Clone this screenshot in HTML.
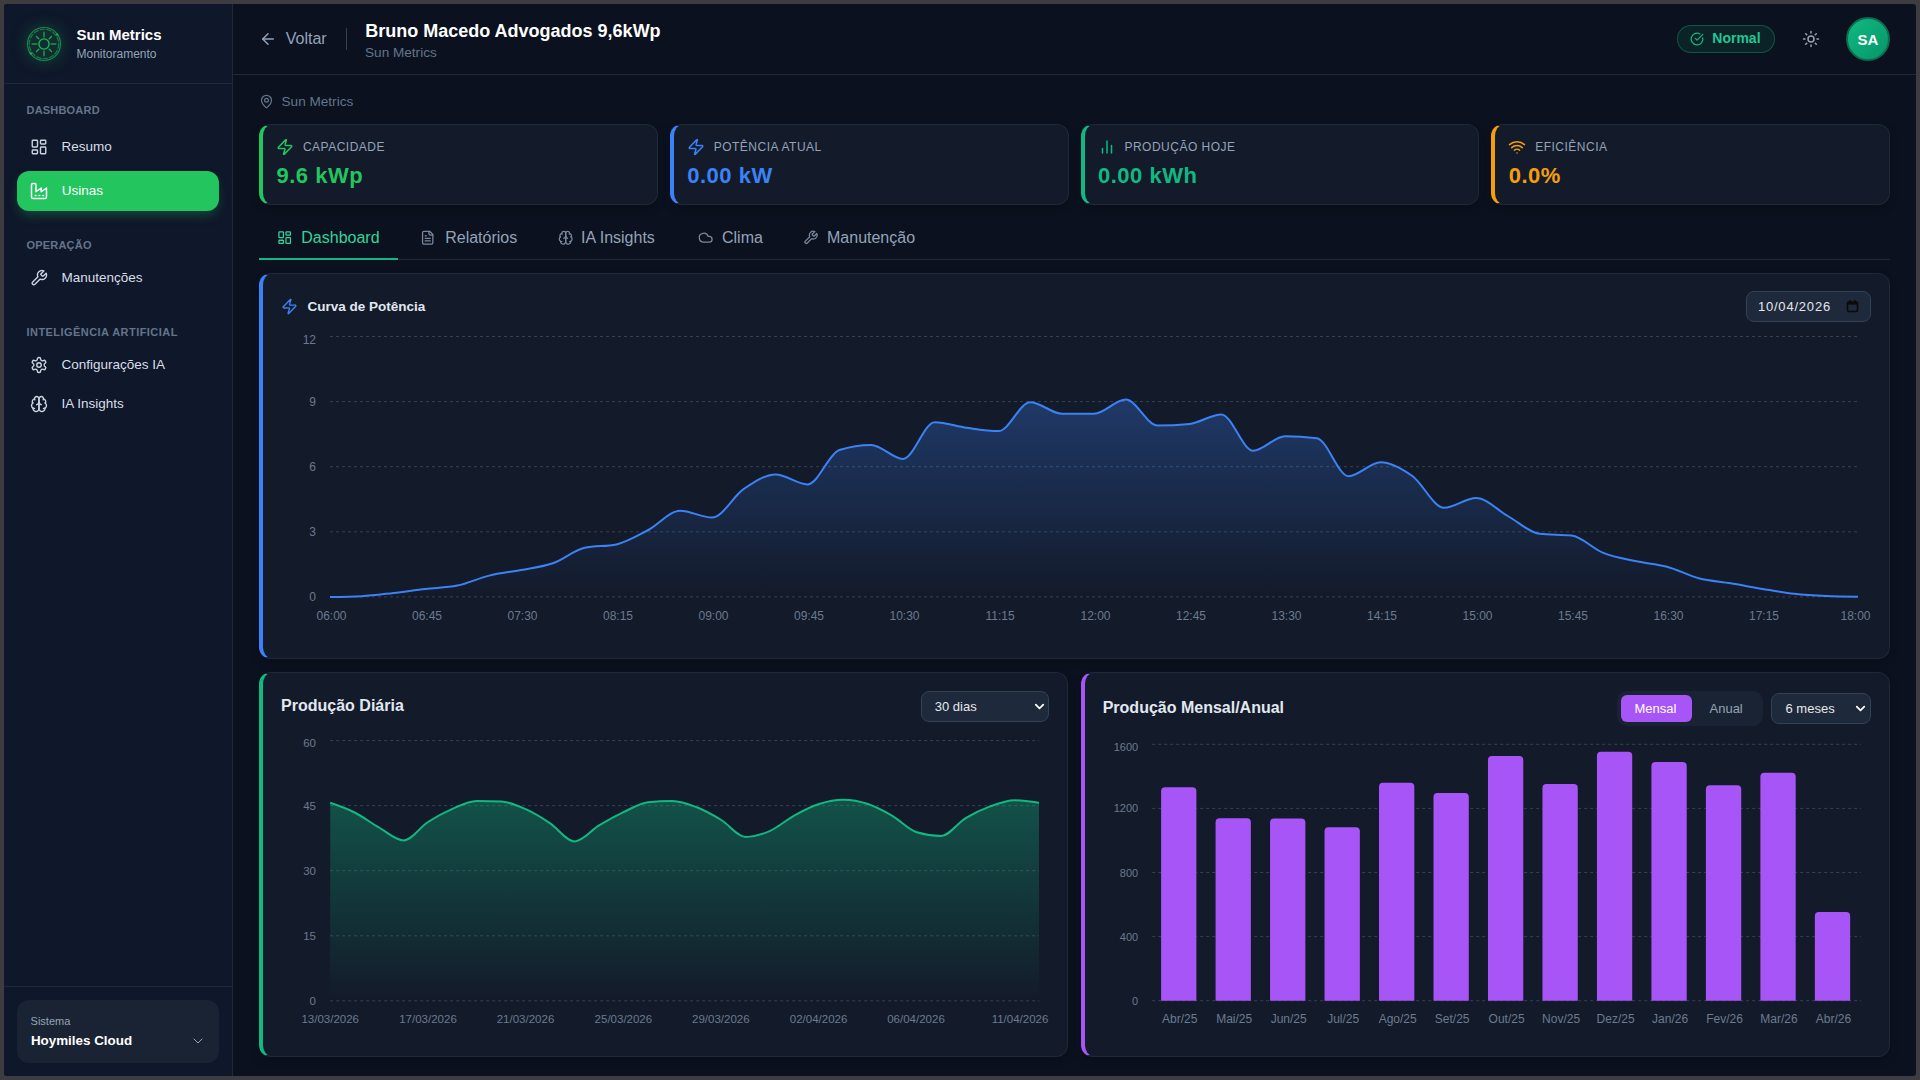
<!DOCTYPE html><html><head><meta charset="utf-8"><style>
html,body{margin:0;padding:0;width:1920px;height:1080px;overflow:hidden;background:#3d3c41;font-family:"Liberation Sans", sans-serif;}
#app{position:absolute;left:4px;top:4px;width:1912px;height:1072px;border-radius:3px;overflow:hidden;background:#0b111e;}
</style></head><body><div id="app"></div>
<div style="position:absolute;left:0;top:0;width:1920px;height:1080px;">
<div style="position:absolute;left:4.00px;top:4.00px;width:228.00px;height:1072.00px;background:#0f172a;border-top-left-radius:3px;border-bottom-left-radius:3px;"></div>
<div style="position:absolute;left:232.00px;top:4.00px;width:1.00px;height:1072.00px;background:#1e293b;"></div>
<div style="position:absolute;left:4.00px;top:83.00px;width:228.00px;height:1.00px;background:#1e293b;"></div>
<div style="position:absolute;left:26px;top:26px;width:36px;height:36px;border-radius:18px;background:rgba(34,197,94,0.13);box-shadow:0 0 16px rgba(34,197,94,0.25);"></div>
<svg style="position:absolute;left:24px;top:24px" width="40" height="40" viewBox="0 0 40 40" fill="none" stroke="#22c55e" stroke-linecap="round">
<circle cx="20" cy="20" r="16.5" stroke-width="1.2" stroke-opacity="0.6"/>
<circle cx="20" cy="20" r="14.7" stroke-width="1.1" stroke-opacity="0.55" stroke-dasharray="4.5 2"/>
<circle cx="33.2" cy="10.6" r="1.2" fill="#22c55e" fill-opacity="0.8" stroke="none"/>
<circle cx="6.8" cy="29.4" r="1.2" fill="#22c55e" fill-opacity="0.8" stroke="none"/>
<circle cx="20" cy="20" r="5.1" stroke-width="1.3" stroke-opacity="0.95"/>
<g stroke-width="1.5" stroke-opacity="0.7"><path d="M20 8.2v4.6M20 27.2v4.6M8.2 20h4.6M27.2 20h4.6"/></g>
<g stroke-width="1.3" stroke-opacity="0.85"><path d="M12.5 12.5l2.4 2.4M25.1 25.1l2.4 2.4M12.5 27.5l2.4-2.4M25.1 14.9l2.4-2.4"/></g>
</svg>
<div style="position:absolute;left:76.50px;top:26.82px;font-size:15px;line-height:15px;font-weight:700;color:#ffffff;letter-spacing:0px;white-space:nowrap;">Sun Metrics</div>
<div style="position:absolute;left:76.50px;top:47.94px;font-size:12px;line-height:12px;font-weight:400;color:#94a3b8;letter-spacing:0px;white-space:nowrap;">Monitoramento</div>
<div style="position:absolute;left:26.50px;top:104.63px;font-size:11px;line-height:11px;font-weight:700;color:#64748b;letter-spacing:0.2px;white-space:nowrap;">DASHBOARD</div>
<svg style="position:absolute;left:30.00px;top:138.00px;" width="18" height="18" viewBox="0 0 24 24" fill="none" stroke="#cbd5e1" stroke-width="1.85" stroke-linecap="round" stroke-linejoin="round"><rect width="7" height="9" x="3" y="3" rx="1"/><rect width="7" height="5" x="14" y="3" rx="1"/><rect width="7" height="9" x="14" y="12" rx="1"/><rect width="7" height="5" x="3" y="16" rx="1"/></svg>
<div style="position:absolute;left:61.50px;top:139.91px;font-size:13.5px;line-height:13.5px;font-weight:400;color:#d9dee7;letter-spacing:0px;white-space:nowrap;">Resumo</div>
<div style="position:absolute;left:17.00px;top:171.00px;width:202.00px;height:40.00px;background:#22c55e;border-radius:12px;box-shadow:0 6px 12px -2px rgba(34,197,94,0.3);"></div>
<svg style="position:absolute;left:30.00px;top:182.00px;" width="18" height="18" viewBox="0 0 24 24" fill="none" stroke="#ffffff" stroke-width="2" stroke-linecap="round" stroke-linejoin="round"><path d="M2 20a2 2 0 0 0 2 2h16a2 2 0 0 0 2-2V8l-7 5V8l-7 5V4a2 2 0 0 0-2-2H4a2 2 0 0 0-2 2Z"/><path d="M17 18h1"/><path d="M12 18h1"/><path d="M7 18h1"/></svg>
<div style="position:absolute;left:61.75px;top:184.31px;font-size:13.5px;line-height:13.5px;font-weight:400;color:#ffffff;letter-spacing:0px;white-space:nowrap;">Usinas</div>
<div style="position:absolute;left:26.50px;top:239.53px;font-size:11px;line-height:11px;font-weight:700;color:#64748b;letter-spacing:0.2px;white-space:nowrap;">OPERAÇÃO</div>
<svg style="position:absolute;left:30.00px;top:268.80px;" width="18" height="18" viewBox="0 0 24 24" fill="none" stroke="#cbd5e1" stroke-width="1.85" stroke-linecap="round" stroke-linejoin="round"><path d="M14.7 6.3a1 1 0 0 0 0 1.4l1.6 1.6a1 1 0 0 0 1.4 0l3.77-3.77a6 6 0 0 1-7.94 7.94l-6.91 6.91a2.12 2.12 0 0 1-3-3l6.91-6.91a6 6 0 0 1 7.94-7.94l-3.76 3.76z"/></svg>
<div style="position:absolute;left:61.50px;top:271.21px;font-size:13.5px;line-height:13.5px;font-weight:400;color:#d9dee7;letter-spacing:0px;white-space:nowrap;">Manutenções</div>
<div style="position:absolute;left:26.50px;top:326.83px;font-size:11px;line-height:11px;font-weight:700;color:#64748b;letter-spacing:0.45px;white-space:nowrap;">INTELIGÊNCIA ARTIFICIAL</div>
<svg style="position:absolute;left:30.00px;top:355.90px;" width="18" height="18" viewBox="0 0 24 24" fill="none" stroke="#cbd5e1" stroke-width="1.85" stroke-linecap="round" stroke-linejoin="round"><path d="M12.22 2h-.44a2 2 0 0 0-2 2v.18a2 2 0 0 1-1 1.73l-.43.25a2 2 0 0 1-2 0l-.15-.08a2 2 0 0 0-2.73.73l-.22.38a2 2 0 0 0 .73 2.73l.15.1a2 2 0 0 1 1 1.72v.51a2 2 0 0 1-1 1.74l-.15.09a2 2 0 0 0-.73 2.73l.22.38a2 2 0 0 0 2.73.73l.15-.08a2 2 0 0 1 2 0l.43.25a2 2 0 0 1 1 1.73V20a2 2 0 0 0 2 2h.44a2 2 0 0 0 2-2v-.18a2 2 0 0 1 1-1.73l.43-.25a2 2 0 0 1 2 0l.15.08a2 2 0 0 0 2.73-.73l.22-.39a2 2 0 0 0-.73-2.73l-.15-.08a2 2 0 0 1-1-1.74v-.5a2 2 0 0 1 1-1.74l.15-.09a2 2 0 0 0 .73-2.73l-.22-.38a2 2 0 0 0-2.73-.73l-.15.08a2 2 0 0 1-2 0l-.43-.25a2 2 0 0 1-1-1.73V4a2 2 0 0 0-2-2z"/><circle cx="12" cy="12" r="3"/></svg>
<div style="position:absolute;left:61.50px;top:358.31px;font-size:13.5px;line-height:13.5px;font-weight:400;color:#d9dee7;letter-spacing:0px;white-space:nowrap;">Configurações IA</div>
<svg style="position:absolute;left:30.00px;top:394.80px;" width="18" height="18" viewBox="0 0 24 24" fill="none" stroke="#cbd5e1" stroke-width="1.85" stroke-linecap="round" stroke-linejoin="round"><path d="M12 5a3 3 0 1 0-5.997.125 4 4 0 0 0-2.526 5.77 4 4 0 0 0 .556 6.588A4 4 0 1 0 12 18Z"/><path d="M12 5a3 3 0 1 1 5.997.125 4 4 0 0 1 2.526 5.77 4 4 0 0 1-.556 6.588A4 4 0 1 1 12 18Z"/><path d="M15 13a4.5 4.5 0 0 1-3-4 4.5 4.5 0 0 1-3 4"/><path d="M17.599 6.5a3 3 0 0 0 .399-1.375"/><path d="M6.003 5.125A3 3 0 0 0 6.401 6.5"/><path d="M3.477 10.896a4 4 0 0 1 .585-.396"/><path d="M19.938 10.5a4 4 0 0 1 .585.396"/><path d="M6 18a4 4 0 0 1-1.967-.516"/><path d="M19.967 17.484A4 4 0 0 1 18 18"/></svg>
<div style="position:absolute;left:61.50px;top:397.21px;font-size:13.5px;line-height:13.5px;font-weight:400;color:#d9dee7;letter-spacing:0px;white-space:nowrap;">IA Insights</div>
<div style="position:absolute;left:4.00px;top:986.00px;width:228.00px;height:1.00px;background:#1e293b;"></div>
<div style="position:absolute;left:17.00px;top:1000.00px;width:202.00px;height:63.00px;background:#1a2333;border-radius:12px;"></div>
<div style="position:absolute;left:30.60px;top:1015.88px;font-size:11px;line-height:11px;font-weight:400;color:#94a3b8;letter-spacing:0px;white-space:nowrap;">Sistema</div>
<div style="position:absolute;left:30.90px;top:1034.05px;font-size:13.4px;line-height:13.4px;font-weight:700;color:#ffffff;letter-spacing:0px;white-space:nowrap;">Hoymiles Cloud</div>
<svg style="position:absolute;left:189.50px;top:1032.60px;" width="16" height="16" viewBox="0 0 24 24" fill="none" stroke="#94a3b8" stroke-width="1.5" stroke-linecap="round" stroke-linejoin="round"><path d="m6 9 6 6 6-6"/></svg>
<div style="position:absolute;left:233.00px;top:74.00px;width:1683.00px;height:1.00px;background:#1e293b;"></div>
<svg style="position:absolute;left:258.50px;top:29.70px;" width="18" height="18" viewBox="0 0 24 24" fill="none" stroke="#94a3b8" stroke-width="2" stroke-linecap="round" stroke-linejoin="round"><path d="m12 19-7-7 7-7"/><path d="M19 12H5"/></svg>
<div style="position:absolute;left:285.75px;top:31.38px;font-size:16px;line-height:16px;font-weight:400;color:#94a3b8;letter-spacing:0px;white-space:nowrap;">Voltar</div>
<div style="position:absolute;left:346.00px;top:28.00px;width:1.00px;height:22.00px;background:#334155;"></div>
<div style="position:absolute;left:365.25px;top:21.71px;font-size:18px;line-height:18px;font-weight:700;color:#ffffff;letter-spacing:0px;white-space:nowrap;">Bruno Macedo Advogados 9,6kWp</div>
<div style="position:absolute;left:365.00px;top:45.61px;font-size:13.6px;line-height:13.6px;font-weight:400;color:#64748b;letter-spacing:0px;white-space:nowrap;">Sun Metrics</div>
<div style="position:absolute;left:1677.00px;top:25.00px;width:98.00px;height:28.00px;background:rgba(16,185,129,0.1);border:1px solid rgba(16,185,129,0.35);border-radius:14px;box-sizing:border-box;"></div>
<svg style="position:absolute;left:1690.30px;top:32.40px;" width="14" height="14" viewBox="0 0 24 24" fill="none" stroke="#10b981" stroke-width="2.1" stroke-linecap="round" stroke-linejoin="round"><path d="M21.801 10A10 10 0 1 1 17 3.335"/><path d="m9 11 3 3L22 4"/></svg>
<div style="position:absolute;left:1712.30px;top:31.46px;font-size:14px;line-height:14px;font-weight:700;color:#1fc893;letter-spacing:0px;white-space:nowrap;">Normal</div>
<svg style="position:absolute;left:1802.00px;top:30.00px;" width="18" height="18" viewBox="0 0 24 24" fill="none" stroke="#9ca3af" stroke-width="2" stroke-linecap="round" stroke-linejoin="round"><circle cx="12" cy="12" r="4"/><path d="M12 2v2"/><path d="M12 20v2"/><path d="m4.93 4.93 1.41 1.41"/><path d="m17.66 17.66 1.41 1.41"/><path d="M2 12h2"/><path d="M20 12h2"/><path d="m6.34 17.66-1.41 1.41"/><path d="m19.07 4.93-1.41 1.41"/></svg>
<div style="position:absolute;left:1846px;top:17px;width:44px;height:44px;border-radius:22px;box-sizing:border-box;border:2.5px solid #0e6b4f;background:linear-gradient(135deg,#10b981,#059669);"></div>
<div style="position:absolute;left:1853.00px;top:31.67px;font-size:15px;line-height:15px;font-weight:700;color:#ffffff;letter-spacing:0px;white-space:nowrap;width:30px;text-align:center;">SA</div>
<svg style="position:absolute;left:258.50px;top:94.00px;" width="15" height="15" viewBox="0 0 24 24" fill="none" stroke="#64748b" stroke-width="2" stroke-linecap="round" stroke-linejoin="round"><path d="M20 10c0 4.993-5.539 10.193-7.399 11.799a1 1 0 0 1-1.202 0C9.539 20.193 4 14.993 4 10a8 8 0 0 1 16 0"/><circle cx="12" cy="10" r="3"/></svg>
<div style="position:absolute;left:281.50px;top:94.86px;font-size:13.6px;line-height:13.6px;font-weight:400;color:#64748b;letter-spacing:0px;white-space:nowrap;">Sun Metrics</div>
<div style="position:absolute;left:259.00px;top:124.00px;width:398.75px;height:81.00px;background:#131a2a;border:1px solid #1e293b;border-left:4px solid #22c55e;border-radius:12px;box-sizing:border-box;box-shadow:0 4px 8px rgba(0,0,0,0.18);"></div>
<svg style="position:absolute;left:276.00px;top:138.00px;" width="18" height="18" viewBox="0 0 24 24" fill="none" stroke="#22c55e" stroke-width="2" stroke-linecap="round" stroke-linejoin="round"><path d="M4 14a1 1 0 0 1-.78-1.63l9.9-10.2a.5.5 0 0 1 .86.46l-1.92 6.02A1 1 0 0 0 13 10h7a1 1 0 0 1 .78 1.63l-9.9 10.2a.5.5 0 0 1-.86-.46l1.92-6.02A1 1 0 0 0 11 14z"/></svg>
<div style="position:absolute;left:302.90px;top:140.59px;font-size:12px;line-height:12px;font-weight:400;color:#94a3b8;letter-spacing:0.5px;white-space:nowrap;">CAPACIDADE</div>
<div style="position:absolute;left:276.50px;top:165.45px;font-size:22px;line-height:22px;font-weight:700;color:#22c55e;letter-spacing:0.5px;white-space:nowrap;">9.6 kWp</div>
<div style="position:absolute;left:669.75px;top:124.00px;width:398.75px;height:81.00px;background:#131a2a;border:1px solid #1e293b;border-left:4px solid #3b82f6;border-radius:12px;box-sizing:border-box;box-shadow:0 4px 8px rgba(0,0,0,0.18);"></div>
<svg style="position:absolute;left:686.75px;top:138.00px;" width="18" height="18" viewBox="0 0 24 24" fill="none" stroke="#3b82f6" stroke-width="2" stroke-linecap="round" stroke-linejoin="round"><path d="M4 14a1 1 0 0 1-.78-1.63l9.9-10.2a.5.5 0 0 1 .86.46l-1.92 6.02A1 1 0 0 0 13 10h7a1 1 0 0 1 .78 1.63l-9.9 10.2a.5.5 0 0 1-.86-.46l1.92-6.02A1 1 0 0 0 11 14z"/></svg>
<div style="position:absolute;left:713.65px;top:140.59px;font-size:12px;line-height:12px;font-weight:400;color:#94a3b8;letter-spacing:0.5px;white-space:nowrap;">POTÊNCIA ATUAL</div>
<div style="position:absolute;left:687.25px;top:165.45px;font-size:22px;line-height:22px;font-weight:700;color:#3b82f6;letter-spacing:0.5px;white-space:nowrap;">0.00 kW</div>
<div style="position:absolute;left:1080.50px;top:124.00px;width:398.75px;height:81.00px;background:#131a2a;border:1px solid #1e293b;border-left:4px solid #10b981;border-radius:12px;box-sizing:border-box;box-shadow:0 4px 8px rgba(0,0,0,0.18);"></div>
<svg style="position:absolute;left:1097.50px;top:138.00px;" width="18" height="18" viewBox="0 0 24 24" fill="none" stroke="#10b981" stroke-width="2" stroke-linecap="round" stroke-linejoin="round"><path d="M18 20V10"/><path d="M12 20V4"/><path d="M6 20v-6"/></svg>
<div style="position:absolute;left:1124.40px;top:140.59px;font-size:12px;line-height:12px;font-weight:400;color:#94a3b8;letter-spacing:0.5px;white-space:nowrap;">PRODUÇÃO HOJE</div>
<div style="position:absolute;left:1098.00px;top:165.45px;font-size:22px;line-height:22px;font-weight:700;color:#10b981;letter-spacing:0.5px;white-space:nowrap;">0.00 kWh</div>
<div style="position:absolute;left:1491.25px;top:124.00px;width:398.75px;height:81.00px;background:#131a2a;border:1px solid #1e293b;border-left:4px solid #f59e0b;border-radius:12px;box-sizing:border-box;box-shadow:0 4px 8px rgba(0,0,0,0.18);"></div>
<svg style="position:absolute;left:1508.25px;top:138.00px;" width="18" height="18" viewBox="0 0 24 24" fill="none" stroke="#f59e0b" stroke-width="2" stroke-linecap="round" stroke-linejoin="round"><path d="M12 20h.01"/><path d="M2 8.82a15 15 0 0 1 20 0"/><path d="M5 12.859a10 10 0 0 1 14 0"/><path d="M8.5 16.429a5 5 0 0 1 7 0"/></svg>
<div style="position:absolute;left:1535.15px;top:140.59px;font-size:12px;line-height:12px;font-weight:400;color:#94a3b8;letter-spacing:0.5px;white-space:nowrap;">EFICIÊNCIA</div>
<div style="position:absolute;left:1508.75px;top:165.45px;font-size:22px;line-height:22px;font-weight:700;color:#f59e0b;letter-spacing:0.5px;white-space:nowrap;">0.0%</div>
<div style="position:absolute;left:259.00px;top:259.00px;width:1631.00px;height:1.00px;background:#1e293b;"></div>
<div style="position:absolute;left:259.00px;top:258.00px;width:139.00px;height:2.00px;background:#10b981;"></div>
<svg style="position:absolute;left:276.60px;top:229.90px;" width="15.4" height="15.4" viewBox="0 0 24 24" fill="none" stroke="#34d399" stroke-width="2" stroke-linecap="round" stroke-linejoin="round"><rect width="7" height="9" x="3" y="3" rx="1"/><rect width="7" height="5" x="14" y="3" rx="1"/><rect width="7" height="9" x="14" y="12" rx="1"/><rect width="7" height="5" x="3" y="16" rx="1"/></svg>
<div style="position:absolute;left:301.30px;top:230.18px;font-size:16px;line-height:16px;font-weight:400;color:#34d399;letter-spacing:0px;white-space:nowrap;">Dashboard</div>
<svg style="position:absolute;left:420.10px;top:229.90px;" width="15.4" height="15.4" viewBox="0 0 24 24" fill="none" stroke="#7b889c" stroke-width="2" stroke-linecap="round" stroke-linejoin="round"><path d="M15 2H6a2 2 0 0 0-2 2v16a2 2 0 0 0 2 2h12a2 2 0 0 0 2-2V7Z"/><path d="M14 2v4a2 2 0 0 0 2 2h4"/><path d="M10 9H8"/><path d="M16 13H8"/><path d="M16 17H8"/></svg>
<div style="position:absolute;left:445.20px;top:230.18px;font-size:16px;line-height:16px;font-weight:400;color:#94a3b8;letter-spacing:0px;white-space:nowrap;">Relatórios</div>
<svg style="position:absolute;left:557.60px;top:229.90px;" width="15.4" height="15.4" viewBox="0 0 24 24" fill="none" stroke="#7b889c" stroke-width="2" stroke-linecap="round" stroke-linejoin="round"><path d="M12 5a3 3 0 1 0-5.997.125 4 4 0 0 0-2.526 5.77 4 4 0 0 0 .556 6.588A4 4 0 1 0 12 18Z"/><path d="M12 5a3 3 0 1 1 5.997.125 4 4 0 0 1 2.526 5.77 4 4 0 0 1-.556 6.588A4 4 0 1 1 12 18Z"/><path d="M15 13a4.5 4.5 0 0 1-3-4 4.5 4.5 0 0 1-3 4"/><path d="M17.599 6.5a3 3 0 0 0 .399-1.375"/><path d="M6.003 5.125A3 3 0 0 0 6.401 6.5"/><path d="M3.477 10.896a4 4 0 0 1 .585-.396"/><path d="M19.938 10.5a4 4 0 0 1 .585.396"/><path d="M6 18a4 4 0 0 1-1.967-.516"/><path d="M19.967 17.484A4 4 0 0 1 18 18"/></svg>
<div style="position:absolute;left:581.00px;top:230.18px;font-size:16px;line-height:16px;font-weight:400;color:#94a3b8;letter-spacing:0px;white-space:nowrap;">IA Insights</div>
<svg style="position:absolute;left:698.10px;top:229.90px;" width="15.4" height="15.4" viewBox="0 0 24 24" fill="none" stroke="#7b889c" stroke-width="2" stroke-linecap="round" stroke-linejoin="round"><path d="M17.5 19H9a7 7 0 1 1 6.71-9h1.79a4.5 4.5 0 1 1 0 9Z"/></svg>
<div style="position:absolute;left:722.00px;top:230.18px;font-size:16px;line-height:16px;font-weight:400;color:#94a3b8;letter-spacing:0px;white-space:nowrap;">Clima</div>
<svg style="position:absolute;left:802.60px;top:229.90px;" width="15.4" height="15.4" viewBox="0 0 24 24" fill="none" stroke="#7b889c" stroke-width="2" stroke-linecap="round" stroke-linejoin="round"><path d="M14.7 6.3a1 1 0 0 0 0 1.4l1.6 1.6a1 1 0 0 0 1.4 0l3.77-3.77a6 6 0 0 1-7.94 7.94l-6.91 6.91a2.12 2.12 0 0 1-3-3l6.91-6.91a6 6 0 0 1 7.94-7.94l-3.76 3.76z"/></svg>
<div style="position:absolute;left:827.00px;top:230.18px;font-size:16px;line-height:16px;font-weight:400;color:#94a3b8;letter-spacing:0px;white-space:nowrap;">Manutenção</div>
<div style="position:absolute;left:259.00px;top:273.00px;width:1631.00px;height:385.50px;background:#131a2a;border:1px solid #1e293b;border-left:4px solid #3b82f6;border-radius:12px;box-sizing:border-box;box-shadow:0 4px 8px rgba(0,0,0,0.18);"></div>
<svg style="position:absolute;left:281.20px;top:297.80px;" width="17" height="17" viewBox="0 0 24 24" fill="none" stroke="#3b82f6" stroke-width="2" stroke-linecap="round" stroke-linejoin="round"><path d="M4 14a1 1 0 0 1-.78-1.63l9.9-10.2a.5.5 0 0 1 .86.46l-1.92 6.02A1 1 0 0 0 13 10h7a1 1 0 0 1 .78 1.63l-9.9 10.2a.5.5 0 0 1-.86-.46l1.92-6.02A1 1 0 0 0 11 14z"/></svg>
<div style="position:absolute;left:307.60px;top:300.41px;font-size:13.5px;line-height:13.5px;font-weight:700;color:#e2e8f0;letter-spacing:0px;white-space:nowrap;">Curva de Potência</div>
<div style="position:absolute;left:1746.00px;top:291.00px;width:125.00px;height:31.00px;background:#1e293b;border:1px solid #334155;border-radius:8px;box-sizing:border-box;"></div>
<div style="position:absolute;left:1757.90px;top:300.15px;font-size:13px;line-height:13px;font-weight:400;color:#e5e7eb;letter-spacing:0.8px;white-space:nowrap;">10/04/2026</div>
<svg style="position:absolute;left:1846px;top:299px" width="13" height="14" viewBox="0 0 13 14"><rect x="1.5" y="3" width="10" height="9.5" rx="1.2" fill="none" stroke="#0a0a0a" stroke-width="1.6"/><rect x="1.5" y="3" width="10" height="2.6" fill="#0a0a0a"/><rect x="3.3" y="1" width="1.6" height="2.5" fill="#0a0a0a"/><rect x="8.1" y="1" width="1.6" height="2.5" fill="#0a0a0a"/></svg>
<div style="position:absolute;left:259.00px;top:672.20px;width:808.50px;height:385.30px;background:#131a2a;border:1px solid #1e293b;border-left:4px solid #10b981;border-radius:12px;box-sizing:border-box;box-shadow:0 4px 8px rgba(0,0,0,0.18);"></div>
<div style="position:absolute;left:281.10px;top:697.68px;font-size:16px;line-height:16px;font-weight:700;color:#e2e8f0;letter-spacing:0px;white-space:nowrap;">Produção Diária</div>
<div style="position:absolute;left:921.00px;top:691.00px;width:128.00px;height:31.00px;background:#1e293b;border:1px solid #334155;border-radius:8px;box-sizing:border-box;"></div>
<div style="position:absolute;left:934.80px;top:700.15px;font-size:13px;line-height:13px;font-weight:400;color:#e5e7eb;letter-spacing:0px;white-space:nowrap;">30 dias</div>
<svg style="position:absolute;left:1031.50px;top:698.50px;" width="15" height="15" viewBox="0 0 24 24" fill="none" stroke="#ffffff" stroke-width="2.8" stroke-linecap="round" stroke-linejoin="round"><path d="m6 9 6 6 6-6"/></svg>
<div style="position:absolute;left:1081.00px;top:672.20px;width:809.00px;height:385.30px;background:#131a2a;border:1px solid #1e293b;border-left:4px solid #a855f7;border-radius:12px;box-sizing:border-box;box-shadow:0 4px 8px rgba(0,0,0,0.18);"></div>
<div style="position:absolute;left:1102.70px;top:700.38px;font-size:16px;line-height:16px;font-weight:700;color:#e2e8f0;letter-spacing:0px;white-space:nowrap;">Produção Mensal/Anual</div>
<div style="position:absolute;left:1617.30px;top:691.00px;width:145.40px;height:34.70px;background:#1a2333;border-radius:10px;"></div>
<div style="position:absolute;left:1621.00px;top:695.00px;width:71.00px;height:27.00px;background:#a855f7;border-radius:6px;"></div>
<div style="position:absolute;left:1634.50px;top:702.15px;font-size:13px;line-height:13px;font-weight:400;color:#ffffff;letter-spacing:0px;white-space:nowrap;">Mensal</div>
<div style="position:absolute;left:1709.50px;top:702.15px;font-size:13px;line-height:13px;font-weight:400;color:#94a3b8;letter-spacing:0px;white-space:nowrap;">Anual</div>
<div style="position:absolute;left:1771.00px;top:693.00px;width:100.00px;height:31.00px;background:#1e293b;border:1px solid #334155;border-radius:8px;box-sizing:border-box;"></div>
<div style="position:absolute;left:1785.50px;top:702.15px;font-size:13px;line-height:13px;font-weight:400;color:#e5e7eb;letter-spacing:0px;white-space:nowrap;">6 meses</div>
<svg style="position:absolute;left:1853.00px;top:700.50px;" width="15" height="15" viewBox="0 0 24 24" fill="none" stroke="#ffffff" stroke-width="2.8" stroke-linecap="round" stroke-linejoin="round"><path d="m6 9 6 6 6-6"/></svg>
<svg style="position:absolute;left:0;top:0" width="1920" height="1080" viewBox="0 0 1920 1080"><defs><linearGradient id="gb" x1="0" y1="0" x2="0" y2="1"><stop offset="0" stop-color="#3b82f6" stop-opacity="0.30"/><stop offset="1" stop-color="#3b82f6" stop-opacity="0.0"/></linearGradient><linearGradient id="gt" x1="0" y1="0" x2="0" y2="1"><stop offset="0" stop-color="#10b981" stop-opacity="0.35"/><stop offset="1" stop-color="#10b981" stop-opacity="0.0"/></linearGradient></defs><line x1="330" y1="336.5" x2="1858" y2="336.5" stroke="#374151" stroke-dasharray="3 3" stroke-width="1"/><line x1="330" y1="401.6" x2="1858" y2="401.6" stroke="#374151" stroke-dasharray="3 3" stroke-width="1"/><line x1="330" y1="466.7" x2="1858" y2="466.7" stroke="#374151" stroke-dasharray="3 3" stroke-width="1"/><line x1="330" y1="531.8" x2="1858" y2="531.8" stroke="#374151" stroke-dasharray="3 3" stroke-width="1"/><line x1="330" y1="596.9" x2="1858" y2="596.9" stroke="#374151" stroke-dasharray="3 3" stroke-width="1"/><path d="M330.00,597.00C340.61,596.87,351.22,596.73,361.83,596.20C372.44,595.67,383.06,594.12,393.67,592.90C404.28,591.68,414.89,590.12,425.50,588.90C436.11,587.68,446.72,587.80,457.33,585.60C467.94,583.40,478.56,578.20,489.17,575.60C499.78,573.00,510.39,572.05,521.00,570.00C531.61,567.95,542.22,567.00,552.83,563.30C563.44,559.60,574.06,550.07,584.67,547.80C595.28,545.53,605.89,546.67,616.50,544.40C627.11,542.13,637.72,535.62,648.33,530.00C658.94,524.38,669.56,510.70,680.17,510.70C690.78,510.70,701.39,517.50,712.00,517.50C722.61,517.50,733.22,496.08,743.83,488.90C754.44,481.72,765.06,474.40,775.67,474.40C786.28,474.40,796.89,484.40,807.50,484.40C818.11,484.40,828.72,453.40,839.33,450.00C849.94,446.60,860.56,444.90,871.17,444.90C881.78,444.90,892.39,458.90,903.00,458.90C913.61,458.90,924.22,422.20,934.83,422.20C945.44,422.20,956.06,426.32,966.67,427.80C977.28,429.28,987.89,431.10,998.50,431.10C1009.11,431.10,1019.72,402.20,1030.33,402.20C1040.94,402.20,1051.56,413.80,1062.17,413.80C1072.78,413.80,1083.39,413.80,1094.00,413.80C1104.61,413.80,1115.22,399.60,1125.83,399.60C1136.44,399.60,1147.06,425.60,1157.67,425.60C1168.28,425.60,1178.89,425.07,1189.50,424.00C1200.11,422.93,1210.72,414.40,1221.33,414.40C1231.94,414.40,1242.56,450.70,1253.17,450.70C1263.78,450.70,1274.39,436.20,1285.00,436.20C1295.61,436.20,1306.22,436.87,1316.83,438.20C1327.44,439.53,1338.06,476.20,1348.67,476.20C1359.28,476.20,1369.89,462.20,1380.50,462.20C1391.11,462.20,1401.72,468.40,1412.33,476.00C1422.94,483.60,1433.56,507.80,1444.17,507.80C1454.78,507.80,1465.39,498.00,1476.00,498.00C1486.61,498.00,1497.22,510.03,1507.83,516.00C1518.44,521.97,1529.06,532.60,1539.67,533.80C1550.28,535.00,1560.89,534.40,1571.50,535.60C1582.11,536.80,1592.72,548.65,1603.33,552.90C1613.94,557.15,1624.56,558.80,1635.17,561.10C1645.78,563.40,1656.39,563.85,1667.00,566.70C1677.61,569.55,1688.22,575.43,1698.83,578.20C1709.44,580.97,1720.06,581.52,1730.67,583.30C1741.28,585.08,1751.89,587.15,1762.50,588.90C1773.11,590.65,1783.72,592.62,1794.33,593.80C1804.94,594.98,1815.56,595.53,1826.17,596.00C1836.78,596.47,1847.39,596.58,1858.00,596.70L1858,596.9L330,596.9Z" fill="url(#gb)"/><path d="M330.00,597.00C340.61,596.87,351.22,596.73,361.83,596.20C372.44,595.67,383.06,594.12,393.67,592.90C404.28,591.68,414.89,590.12,425.50,588.90C436.11,587.68,446.72,587.80,457.33,585.60C467.94,583.40,478.56,578.20,489.17,575.60C499.78,573.00,510.39,572.05,521.00,570.00C531.61,567.95,542.22,567.00,552.83,563.30C563.44,559.60,574.06,550.07,584.67,547.80C595.28,545.53,605.89,546.67,616.50,544.40C627.11,542.13,637.72,535.62,648.33,530.00C658.94,524.38,669.56,510.70,680.17,510.70C690.78,510.70,701.39,517.50,712.00,517.50C722.61,517.50,733.22,496.08,743.83,488.90C754.44,481.72,765.06,474.40,775.67,474.40C786.28,474.40,796.89,484.40,807.50,484.40C818.11,484.40,828.72,453.40,839.33,450.00C849.94,446.60,860.56,444.90,871.17,444.90C881.78,444.90,892.39,458.90,903.00,458.90C913.61,458.90,924.22,422.20,934.83,422.20C945.44,422.20,956.06,426.32,966.67,427.80C977.28,429.28,987.89,431.10,998.50,431.10C1009.11,431.10,1019.72,402.20,1030.33,402.20C1040.94,402.20,1051.56,413.80,1062.17,413.80C1072.78,413.80,1083.39,413.80,1094.00,413.80C1104.61,413.80,1115.22,399.60,1125.83,399.60C1136.44,399.60,1147.06,425.60,1157.67,425.60C1168.28,425.60,1178.89,425.07,1189.50,424.00C1200.11,422.93,1210.72,414.40,1221.33,414.40C1231.94,414.40,1242.56,450.70,1253.17,450.70C1263.78,450.70,1274.39,436.20,1285.00,436.20C1295.61,436.20,1306.22,436.87,1316.83,438.20C1327.44,439.53,1338.06,476.20,1348.67,476.20C1359.28,476.20,1369.89,462.20,1380.50,462.20C1391.11,462.20,1401.72,468.40,1412.33,476.00C1422.94,483.60,1433.56,507.80,1444.17,507.80C1454.78,507.80,1465.39,498.00,1476.00,498.00C1486.61,498.00,1497.22,510.03,1507.83,516.00C1518.44,521.97,1529.06,532.60,1539.67,533.80C1550.28,535.00,1560.89,534.40,1571.50,535.60C1582.11,536.80,1592.72,548.65,1603.33,552.90C1613.94,557.15,1624.56,558.80,1635.17,561.10C1645.78,563.40,1656.39,563.85,1667.00,566.70C1677.61,569.55,1688.22,575.43,1698.83,578.20C1709.44,580.97,1720.06,581.52,1730.67,583.30C1741.28,585.08,1751.89,587.15,1762.50,588.90C1773.11,590.65,1783.72,592.62,1794.33,593.80C1804.94,594.98,1815.56,595.53,1826.17,596.00C1836.78,596.47,1847.39,596.58,1858.00,596.70" fill="none" stroke="#3b82f6" stroke-width="2"/><text x="316" y="343.7" text-anchor="end" font-size="12" fill="#6b7a8f" font-family="Liberation Sans">12</text><text x="316" y="405.8" text-anchor="end" font-size="12" fill="#6b7a8f" font-family="Liberation Sans">9</text><text x="316" y="470.9" text-anchor="end" font-size="12" fill="#6b7a8f" font-family="Liberation Sans">6</text><text x="316" y="536.0" text-anchor="end" font-size="12" fill="#6b7a8f" font-family="Liberation Sans">3</text><text x="316" y="601.1" text-anchor="end" font-size="12" fill="#6b7a8f" font-family="Liberation Sans">0</text><text x="331.5" y="619.8" text-anchor="middle" font-size="12" fill="#6b7a8f" font-family="Liberation Sans">06:00</text><text x="427.0" y="619.8" text-anchor="middle" font-size="12" fill="#6b7a8f" font-family="Liberation Sans">06:45</text><text x="522.5" y="619.8" text-anchor="middle" font-size="12" fill="#6b7a8f" font-family="Liberation Sans">07:30</text><text x="618.0" y="619.8" text-anchor="middle" font-size="12" fill="#6b7a8f" font-family="Liberation Sans">08:15</text><text x="713.5" y="619.8" text-anchor="middle" font-size="12" fill="#6b7a8f" font-family="Liberation Sans">09:00</text><text x="809.0" y="619.8" text-anchor="middle" font-size="12" fill="#6b7a8f" font-family="Liberation Sans">09:45</text><text x="904.5" y="619.8" text-anchor="middle" font-size="12" fill="#6b7a8f" font-family="Liberation Sans">10:30</text><text x="1000.0" y="619.8" text-anchor="middle" font-size="12" fill="#6b7a8f" font-family="Liberation Sans">11:15</text><text x="1095.5" y="619.8" text-anchor="middle" font-size="12" fill="#6b7a8f" font-family="Liberation Sans">12:00</text><text x="1191.0" y="619.8" text-anchor="middle" font-size="12" fill="#6b7a8f" font-family="Liberation Sans">12:45</text><text x="1286.5" y="619.8" text-anchor="middle" font-size="12" fill="#6b7a8f" font-family="Liberation Sans">13:30</text><text x="1382.0" y="619.8" text-anchor="middle" font-size="12" fill="#6b7a8f" font-family="Liberation Sans">14:15</text><text x="1477.5" y="619.8" text-anchor="middle" font-size="12" fill="#6b7a8f" font-family="Liberation Sans">15:00</text><text x="1573.0" y="619.8" text-anchor="middle" font-size="12" fill="#6b7a8f" font-family="Liberation Sans">15:45</text><text x="1668.5" y="619.8" text-anchor="middle" font-size="12" fill="#6b7a8f" font-family="Liberation Sans">16:30</text><text x="1764.0" y="619.8" text-anchor="middle" font-size="12" fill="#6b7a8f" font-family="Liberation Sans">17:15</text><text x="1855.5" y="619.8" text-anchor="middle" font-size="12" fill="#6b7a8f" font-family="Liberation Sans">18:00</text><line x1="330.2" y1="740.6" x2="1039" y2="740.6" stroke="#374151" stroke-dasharray="3 3" stroke-width="1"/><line x1="330.2" y1="805.6" x2="1039" y2="805.6" stroke="#374151" stroke-dasharray="3 3" stroke-width="1"/><line x1="330.2" y1="870.7" x2="1039" y2="870.7" stroke="#374151" stroke-dasharray="3 3" stroke-width="1"/><line x1="330.2" y1="935.8" x2="1039" y2="935.8" stroke="#374151" stroke-dasharray="3 3" stroke-width="1"/><line x1="330.2" y1="1000.8" x2="1039" y2="1000.8" stroke="#374151" stroke-dasharray="3 3" stroke-width="1"/><path d="M330.20,802.80C338.35,805.59,346.49,808.38,354.64,812.50C362.79,816.62,370.94,822.85,379.08,827.50C387.23,832.15,395.38,840.40,403.52,840.40C411.67,840.40,419.82,827.27,427.97,822.00C436.11,816.73,444.26,812.30,452.41,808.80C460.55,805.30,468.70,801.00,476.85,801.00C485.00,801.00,493.14,801.17,501.29,801.50C509.44,801.83,517.58,805.57,525.73,809.20C533.88,812.83,542.03,817.93,550.17,823.30C558.32,828.67,566.47,841.40,574.61,841.40C582.76,841.40,590.91,830.27,599.06,825.40C607.20,820.53,615.35,816.07,623.50,812.20C631.64,808.33,639.79,803.07,647.94,802.20C656.09,801.33,664.23,800.90,672.38,800.90C680.53,800.90,688.67,804.12,696.82,807.30C704.97,810.48,713.11,815.07,721.26,820.00C729.41,824.93,737.56,836.90,745.70,836.90C753.85,836.90,762.00,834.40,770.14,830.80C778.29,827.20,786.44,819.77,794.59,815.30C802.73,810.83,810.88,806.58,819.03,804.00C827.17,801.42,835.32,799.80,843.47,799.80C851.62,799.80,859.76,801.33,867.91,804.00C876.06,806.67,884.20,811.10,892.35,815.80C900.50,820.50,908.65,829.73,916.79,832.20C924.94,834.67,933.09,835.90,941.23,835.90C949.38,835.90,957.53,823.02,965.68,818.10C973.82,813.18,981.97,809.37,990.12,806.40C998.26,803.43,1006.41,800.30,1014.56,800.30C1022.71,800.30,1030.85,801.50,1039.00,802.70L1039,1000.8L330.2,1000.8Z" fill="url(#gt)"/><path d="M330.20,802.80C338.35,805.59,346.49,808.38,354.64,812.50C362.79,816.62,370.94,822.85,379.08,827.50C387.23,832.15,395.38,840.40,403.52,840.40C411.67,840.40,419.82,827.27,427.97,822.00C436.11,816.73,444.26,812.30,452.41,808.80C460.55,805.30,468.70,801.00,476.85,801.00C485.00,801.00,493.14,801.17,501.29,801.50C509.44,801.83,517.58,805.57,525.73,809.20C533.88,812.83,542.03,817.93,550.17,823.30C558.32,828.67,566.47,841.40,574.61,841.40C582.76,841.40,590.91,830.27,599.06,825.40C607.20,820.53,615.35,816.07,623.50,812.20C631.64,808.33,639.79,803.07,647.94,802.20C656.09,801.33,664.23,800.90,672.38,800.90C680.53,800.90,688.67,804.12,696.82,807.30C704.97,810.48,713.11,815.07,721.26,820.00C729.41,824.93,737.56,836.90,745.70,836.90C753.85,836.90,762.00,834.40,770.14,830.80C778.29,827.20,786.44,819.77,794.59,815.30C802.73,810.83,810.88,806.58,819.03,804.00C827.17,801.42,835.32,799.80,843.47,799.80C851.62,799.80,859.76,801.33,867.91,804.00C876.06,806.67,884.20,811.10,892.35,815.80C900.50,820.50,908.65,829.73,916.79,832.20C924.94,834.67,933.09,835.90,941.23,835.90C949.38,835.90,957.53,823.02,965.68,818.10C973.82,813.18,981.97,809.37,990.12,806.40C998.26,803.43,1006.41,800.30,1014.56,800.30C1022.71,800.30,1030.85,801.50,1039.00,802.70" fill="none" stroke="#10b981" stroke-width="2"/><text x="316" y="747.1" text-anchor="end" font-size="11.5" fill="#6b7a8f" font-family="Liberation Sans">60</text><text x="316" y="809.6" text-anchor="end" font-size="11.5" fill="#6b7a8f" font-family="Liberation Sans">45</text><text x="316" y="874.7" text-anchor="end" font-size="11.5" fill="#6b7a8f" font-family="Liberation Sans">30</text><text x="316" y="939.8" text-anchor="end" font-size="11.5" fill="#6b7a8f" font-family="Liberation Sans">15</text><text x="316" y="1004.8" text-anchor="end" font-size="11.5" fill="#6b7a8f" font-family="Liberation Sans">0</text><text x="330.2" y="1023.0" text-anchor="middle" font-size="11.5" fill="#6b7a8f" font-family="Liberation Sans">13/03/2026</text><text x="428.0" y="1023.0" text-anchor="middle" font-size="11.5" fill="#6b7a8f" font-family="Liberation Sans">17/03/2026</text><text x="525.5" y="1023.0" text-anchor="middle" font-size="11.5" fill="#6b7a8f" font-family="Liberation Sans">21/03/2026</text><text x="623.4" y="1023.0" text-anchor="middle" font-size="11.5" fill="#6b7a8f" font-family="Liberation Sans">25/03/2026</text><text x="720.8" y="1023.0" text-anchor="middle" font-size="11.5" fill="#6b7a8f" font-family="Liberation Sans">29/03/2026</text><text x="818.6" y="1023.0" text-anchor="middle" font-size="11.5" fill="#6b7a8f" font-family="Liberation Sans">02/04/2026</text><text x="916.0" y="1023.0" text-anchor="middle" font-size="11.5" fill="#6b7a8f" font-family="Liberation Sans">06/04/2026</text><text x="1020.0" y="1023.0" text-anchor="middle" font-size="11.5" fill="#6b7a8f" font-family="Liberation Sans">11/04/2026</text><line x1="1152.2" y1="744.3" x2="1861.1" y2="744.3" stroke="#374151" stroke-dasharray="3 3" stroke-width="1"/><line x1="1152.2" y1="808.4" x2="1861.1" y2="808.4" stroke="#374151" stroke-dasharray="3 3" stroke-width="1"/><line x1="1152.2" y1="872.5" x2="1861.1" y2="872.5" stroke="#374151" stroke-dasharray="3 3" stroke-width="1"/><line x1="1152.2" y1="936.6" x2="1861.1" y2="936.6" stroke="#374151" stroke-dasharray="3 3" stroke-width="1"/><line x1="1152.2" y1="1000.7" x2="1861.1" y2="1000.7" stroke="#374151" stroke-dasharray="3 3" stroke-width="1"/><path d="M1161.10,1000.7V791.20Q1161.10,787.20 1165.10,787.20H1192.40Q1196.40,787.20 1196.40,791.20V1000.7Z" fill="#a855f7"/><text x="1179.8" y="1023.3" text-anchor="middle" font-size="12" fill="#6b7a8f" font-family="Liberation Sans">Abr/25</text><path d="M1215.58,1000.7V822.30Q1215.58,818.30 1219.58,818.30H1246.88Q1250.88,818.30 1250.88,822.30V1000.7Z" fill="#a855f7"/><text x="1234.2" y="1023.3" text-anchor="middle" font-size="12" fill="#6b7a8f" font-family="Liberation Sans">Mai/25</text><path d="M1270.06,1000.7V822.60Q1270.06,818.60 1274.06,818.60H1301.36Q1305.36,818.60 1305.36,822.60V1000.7Z" fill="#a855f7"/><text x="1288.7" y="1023.3" text-anchor="middle" font-size="12" fill="#6b7a8f" font-family="Liberation Sans">Jun/25</text><path d="M1324.54,1000.7V831.20Q1324.54,827.20 1328.54,827.20H1355.84Q1359.84,827.20 1359.84,831.20V1000.7Z" fill="#a855f7"/><text x="1343.2" y="1023.3" text-anchor="middle" font-size="12" fill="#6b7a8f" font-family="Liberation Sans">Jul/25</text><path d="M1379.02,1000.7V786.80Q1379.02,782.80 1383.02,782.80H1410.32Q1414.32,782.80 1414.32,786.80V1000.7Z" fill="#a855f7"/><text x="1397.7" y="1023.3" text-anchor="middle" font-size="12" fill="#6b7a8f" font-family="Liberation Sans">Ago/25</text><path d="M1433.50,1000.7V797.00Q1433.50,793.00 1437.50,793.00H1464.80Q1468.80,793.00 1468.80,797.00V1000.7Z" fill="#a855f7"/><text x="1452.2" y="1023.3" text-anchor="middle" font-size="12" fill="#6b7a8f" font-family="Liberation Sans">Set/25</text><path d="M1487.98,1000.7V760.10Q1487.98,756.10 1491.98,756.10H1519.28Q1523.28,756.10 1523.28,760.10V1000.7Z" fill="#a855f7"/><text x="1506.6" y="1023.3" text-anchor="middle" font-size="12" fill="#6b7a8f" font-family="Liberation Sans">Out/25</text><path d="M1542.46,1000.7V787.90Q1542.46,783.90 1546.46,783.90H1573.76Q1577.76,783.90 1577.76,787.90V1000.7Z" fill="#a855f7"/><text x="1561.1" y="1023.3" text-anchor="middle" font-size="12" fill="#6b7a8f" font-family="Liberation Sans">Nov/25</text><path d="M1596.94,1000.7V755.70Q1596.94,751.70 1600.94,751.70H1628.24Q1632.24,751.70 1632.24,755.70V1000.7Z" fill="#a855f7"/><text x="1615.6" y="1023.3" text-anchor="middle" font-size="12" fill="#6b7a8f" font-family="Liberation Sans">Dez/25</text><path d="M1651.42,1000.7V766.10Q1651.42,762.10 1655.42,762.10H1682.72Q1686.72,762.10 1686.72,766.10V1000.7Z" fill="#a855f7"/><text x="1670.1" y="1023.3" text-anchor="middle" font-size="12" fill="#6b7a8f" font-family="Liberation Sans">Jan/26</text><path d="M1705.90,1000.7V789.20Q1705.90,785.20 1709.90,785.20H1737.20Q1741.20,785.20 1741.20,789.20V1000.7Z" fill="#a855f7"/><text x="1724.5" y="1023.3" text-anchor="middle" font-size="12" fill="#6b7a8f" font-family="Liberation Sans">Fev/26</text><path d="M1760.38,1000.7V776.80Q1760.38,772.80 1764.38,772.80H1791.68Q1795.68,772.80 1795.68,776.80V1000.7Z" fill="#a855f7"/><text x="1779.0" y="1023.3" text-anchor="middle" font-size="12" fill="#6b7a8f" font-family="Liberation Sans">Mar/26</text><path d="M1814.86,1000.7V916.00Q1814.86,912.00 1818.86,912.00H1846.16Q1850.16,912.00 1850.16,916.00V1000.7Z" fill="#a855f7"/><text x="1833.5" y="1023.3" text-anchor="middle" font-size="12" fill="#6b7a8f" font-family="Liberation Sans">Abr/26</text><text x="1138.2" y="751.3" text-anchor="end" font-size="11" fill="#6b7a8f" font-family="Liberation Sans">1600</text><text x="1138.2" y="812.4" text-anchor="end" font-size="11" fill="#6b7a8f" font-family="Liberation Sans">1200</text><text x="1138.2" y="876.5" text-anchor="end" font-size="11" fill="#6b7a8f" font-family="Liberation Sans">800</text><text x="1138.2" y="940.6" text-anchor="end" font-size="11" fill="#6b7a8f" font-family="Liberation Sans">400</text><text x="1138.2" y="1004.7" text-anchor="end" font-size="11" fill="#6b7a8f" font-family="Liberation Sans">0</text></svg>
</div></body></html>
